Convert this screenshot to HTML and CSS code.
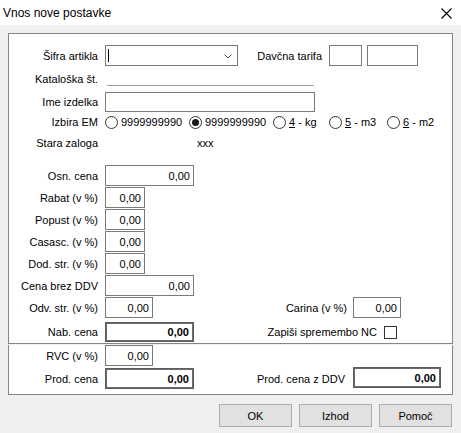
FILE: index.html
```html
<!DOCTYPE html>
<html lang="sl">
<head>
<meta charset="utf-8">
<title>Vnos nove postavke</title>
<link rel="stylesheet" href="styles.css">
</head>
<body>
<div class="titlebar">
  <span class="title">Vnos nove postavke</span>
  <svg class="close" width="11" height="11" viewBox="0 0 11 11"><path d="M0.5 0.5 L10.5 10.5 M10.5 0.5 L0.5 10.5" stroke="#000" stroke-width="1.1" fill="none"/></svg>
</div>

<div class="panel panel-top">
  <div class="row r21">
    <span class="lbl">Šifra artikla</span>
    <div class="combo">
      <span class="caret"></span>
      <svg class="chev" width="8" height="5" viewBox="0 0 8 5"><path d="M0.5 0.5 L4 4 L7.5 0.5" stroke="#444" stroke-width="1" fill="none"/></svg>
    </div>
    <span class="rlbl tarifa-lbl">Davčna tarifa</span>
    <input class="field w33" value="">
    <input class="field w51 ml5" value="">
  </div>

  <div class="row r26">
    <span class="lbl">Kataloška št.</span>
    <div class="underline"></div>
  </div>

  <div class="row r20">
    <span class="lbl">Ime izdelka</span>
    <input class="field w210" value="">
  </div>

  <div class="row r20">
    <span class="lbl">Izbira EM</span>
    <div class="radios">
      <span class="opt w84"><span class="radio"></span>9999999990</span>
      <span class="opt w84"><span class="radio on"></span>9999999990</span>
      <span class="opt w56"><span class="radio"></span><u>4</u>&nbsp;- kg</span>
      <span class="opt w58"><span class="radio"></span><u>5</u>&nbsp;- m3</span>
      <span class="opt"><span class="radio"></span><u>6</u>&nbsp;- m2</span>
    </div>
  </div>

  <div class="row r22">
    <span class="lbl">Stara zaloga</span>
    <span class="xxx">xxx</span>
  </div>

  <div class="row r21 mt11">
    <span class="lbl">Osn. cena</span>
    <input class="field w89" value="0,00">
  </div>
  <div class="row r21 mt1">
    <span class="lbl">Rabat (v %)</span>
    <input class="field w40" value="0,00">
  </div>
  <div class="row r21 mt1">
    <span class="lbl">Popust (v %)</span>
    <input class="field w40" value="0,00">
  </div>
  <div class="row r21 mt1">
    <span class="lbl">Casasc. (v %)</span>
    <input class="field w40" value="0,00">
  </div>
  <div class="row r21 mt1">
    <span class="lbl">Dod. str. (v %)</span>
    <input class="field w40" value="0,00">
  </div>
  <div class="row r21 mt1">
    <span class="lbl">Cena brez DDV</span>
    <input class="field w89" value="0,00">
  </div>
  <div class="row r21 mt1">
    <span class="lbl">Odv. str. (v %)</span>
    <input class="field w48" value="0,00">
    <div class="rgroup carina">
      <span class="rlbl">Carina (v %)</span>
      <input class="field w48" value="0,00">
    </div>
  </div>
  <div class="row r20 mt4">
    <span class="lbl">Nab. cena</span>
    <input class="field w89 bold" value="0,00">
    <div class="rgroup zapisi">
      <span class="rlbl">Zapiši spremembo NC</span>
      <span class="check"></span>
    </div>
  </div>
</div>

<div class="panel panel-bottom">
  <div class="row r21">
    <span class="lbl">RVC (v %)</span>
    <input class="field w48" value="0,00">
  </div>
  <div class="row r21 mt2">
    <span class="lbl">Prod. cena</span>
    <input class="field w89 bold" value="0,00">
    <div class="rgroup proddv">
      <span class="rlbl">Prod. cena z DDV</span>
      <input class="field w88 bold up1" value="0,00">
    </div>
  </div>
</div>

<div class="buttons">
  <button class="btn">OK</button>
  <button class="btn">Izhod</button>
  <button class="btn">Pomoč</button>
</div>
</body>
</html>
```

FILE: styles.css
```css
* { box-sizing: border-box; }

html, body {
  margin: 0;
  padding: 0;
}

body {
  background: #f0f0f0;
  font-family: "Liberation Sans", Arial, sans-serif;
  font-size: 11px;
  color: #000;
  width: 461px;
  height: 433px;
  overflow: hidden;
}

.titlebar {
  height: 25px;
  background: #fff;
  display: flex;
  align-items: center;
  padding: 0 0 0 3px;
  position: relative;
}

.title {
  font-size: 12px;
  flex: 1;
  padding-top: 1px;
}

.close {
  margin-right: 9px;
  margin-top: 1px;
}

.panel {
  margin-left: 8px;
  width: 445px;
  background: #fff;
  border: 1px solid #858585;
}

.panel-top {
  margin-top: 8px;
  padding: 11px 0 1px 0;
}

.panel-bottom {
  margin-top: 1px;
  border-top: none;
  padding: 0 0 5px 0;
}

.row {
  display: flex;
  align-items: center;
}

.r20 { height: 20px; }
.r21 { height: 21px; }
.r22 { height: 22px; }
.r26 { height: 26px; }

.mt1 { margin-top: 1px; }
.mt2 { margin-top: 2px; }
.mt4 { margin-top: 4px; }
.mt11 { margin-top: 11px; }

.lbl {
  width: 96px;
  flex: none;
  text-align: right;
  padding-right: 7px;
  white-space: nowrap;
}

.rlbl {
  white-space: nowrap;
}

.field {
  height: 100%;
  border: 1px solid #7a7a7a;
  background: #fff;
  font-family: "Liberation Sans", Arial, sans-serif;
  font-size: 11px;
  color: #000;
  text-align: right;
  padding: 0 3px 0 2px;
  margin: 0;
  outline: none;
  flex: none;
}

.field.bold {
  font-weight: bold;
  border: 1px solid #5e5e5e;
  box-shadow: inset 0 0 0 1px #6a6a6a;
  padding-right: 4px;
}

.up1 { margin-bottom: 2px; }

.w33 { width: 33px; }
.w40 { width: 40px; }
.w48 { width: 48px; }
.w51 { width: 51px; }
.w88 { width: 88px; }
.w89 { width: 89px; }
.w210 { width: 210px; }
.ml5 { margin-left: 5px; }

.combo {
  width: 133px;
  height: 21px;
  border: 1px solid #7a7a7a;
  background: #fff;
  display: flex;
  align-items: center;
  justify-content: space-between;
  padding: 0 5px 0 2px;
  flex: none;
}

.caret {
  width: 1px;
  height: 13px;
  background: #000;
}

.chev { margin-top: 1px; }

.tarifa-lbl {
  width: 91px;
  text-align: right;
  padding-right: 7px;
}

.underline {
  margin-left: 2px;
  width: 207px;
  height: 13px;
  border-bottom: 1px solid #a0a0a0;
}

.radios {
  display: flex;
  align-items: center;
}

.opt {
  display: flex;
  align-items: center;
  white-space: nowrap;
}

.w84 { width: 84px; }
.w56 { width: 56px; }
.w58 { width: 58px; }

.radio {
  width: 13px;
  height: 13px;
  border: 1px solid #333;
  border-radius: 50%;
  background: #fff;
  margin-right: 3px;
  position: relative;
  flex: none;
}

.radio.on::after {
  content: "";
  position: absolute;
  left: 2px;
  top: 2px;
  width: 7px;
  height: 7px;
  border-radius: 50%;
  background: #1a1a1a;
}

.xxx {
  margin-left: 92px;
}

.rgroup {
  margin-left: auto;
  display: flex;
  align-items: center;
  height: 100%;
}

.rgroup .rlbl { margin-right: 6px; }

.carina { margin-right: 51px; }
.zapisi { margin-right: 55px; }
.zapisi .rlbl { margin-right: 7px; }
.proddv { margin-right: 11px; }
.proddv .rlbl { margin-right: 8px; }

.check {
  width: 13px;
  height: 13px;
  border: 1px solid #333;
  background: #fff;
}

.buttons {
  display: flex;
  justify-content: flex-end;
  gap: 7px;
  padding-right: 9px;
  margin-top: 9px;
}

.btn {
  width: 73px;
  height: 23px;
  background: #e1e1e1;
  border: 1px solid #adadad;
  font-family: "Liberation Sans", Arial, sans-serif;
  font-size: 11px;
  color: #000;
  padding: 0;
  margin: 0;
}
```
